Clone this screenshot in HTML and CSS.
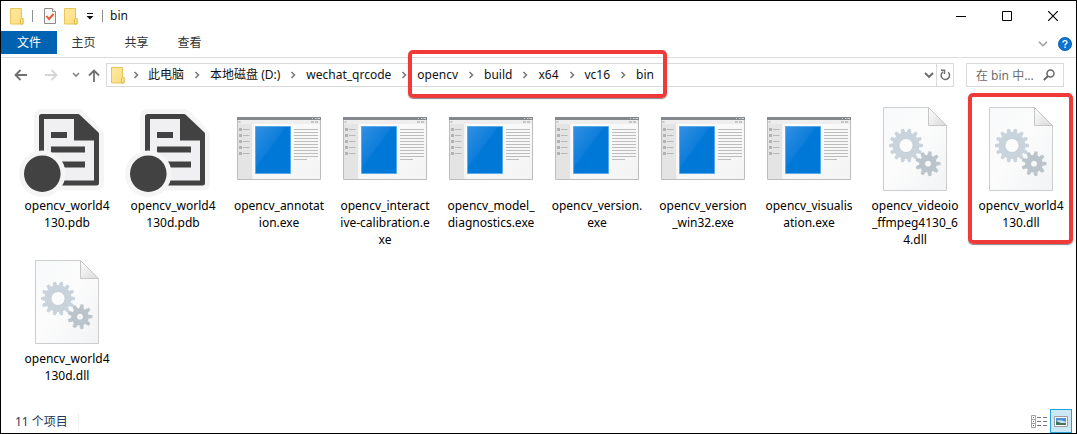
FILE: index.html
```html
<!DOCTYPE html>
<html lang="zh-CN">
<head>
<meta charset="utf-8">
<title>bin</title>
<link rel="stylesheet" href="styles.css">
</head>
<body>
<svg class="defs" aria-hidden="true">
  <defs>
    <linearGradient id="paper" x1="0" y1="0" x2="1" y2="1"><stop offset="0" stop-color="#f7f9fa"/><stop offset=".45" stop-color="#fcfcfc"/><stop offset="1" stop-color="#f1f3f5"/></linearGradient>
    <linearGradient id="fold" x1="0" y1="0" x2="1" y2="1"><stop offset="0" stop-color="#fff"/><stop offset="1" stop-color="#d9d9d9"/></linearGradient>
    <linearGradient id="blue" x1="0" y1="0" x2="1" y2="1"><stop offset="0" stop-color="#3390e2"/><stop offset=".42" stop-color="#0f7edb"/><stop offset=".46" stop-color="#0078d7"/><stop offset="1" stop-color="#0078d7"/></linearGradient>
    <linearGradient id="pane" x1="0" y1="0" x2="1" y2="1"><stop offset="0" stop-color="#fff"/><stop offset="1" stop-color="#f3f3f3"/></linearGradient>
    <linearGradient id="gold" x1="0" y1="0" x2="1" y2="1"><stop offset="0" stop-color="#ffe9a2"/><stop offset="1" stop-color="#fbdc7c"/></linearGradient>
    <symbol id="folder" viewBox="0 0 14 17">
      <path d="M.5.5h11v10h1.500v5.500H.5z" fill="url(#gold)" stroke="#e8c55a"/>
      <path d="M10.500 16v-4.500l1-1h1.500V16z" fill="#ffe9a2" stroke="#e3b93f"/>
    </symbol>
    <symbol id="pdb" viewBox="0 0 96 96">
      <path d="M22.500 15.500H59L77.500 34v48h-55z" fill="#f5f5f6" stroke="#f5f5f6" stroke-width="15" stroke-linejoin="round"/>
      <path d="M22.500 15.500H59L77.500 33v49h-55z" fill="#f0eff1" stroke="#424242" stroke-width="5" stroke-linejoin="round"/>
      <path d="M55 15h5l19 18v6.500H55z" fill="#424242"/>
      <path d="M32 31h16v6H32zM32 45.500h34v6H32zM40 60.500h26v6H40z" fill="#424242"/>
      <circle cx="23.300" cy="72.700" r="23.300" fill="#f5f5f6"/>
      <circle cx="23.300" cy="72.700" r="18.300" fill="#424242"/>
    </symbol>
    <symbol id="exe" viewBox="0 0 96 96">
      <path d="M6.500 16.500h83v62h-83z" fill="url(#pane)" stroke="#bcbcbc"/>
      <path d="M7 19h82v4H7z" fill="#eeeeef"/>
      <path d="M7 23h14v55H7z" fill="#e4e4e4"/>
      <path d="M21 23h1.500v55H21z" fill="#f4f4f4"/>
      <path d="M6 16h84v3H6z" fill="#84878c"/>
      <path d="M84 17.500h1.500m1 0h2.500M81 17.500h1" stroke="#d6d6d6"/>
      <path d="M7.500 21h2M80 21h3m1 0h3" stroke="#c6c6c6" stroke-width="2"/>
      <path d="M8 28.500h3m-3 6h3m-3 6h3m-3 6h3m-3 6h3" stroke="#b0b2b4" stroke-width="3"/>
      <path d="M12 28.500h6.500m-6.500 6h6.500m-6.500 6h6.500m-6.500 6h6.500m-6.500 6h6.500" stroke="#b8b8b8"/>
      <path d="M24.500 25.500h35v47h-35z" fill="url(#blue)" stroke="#58a9e8"/>
      <path d="M63 28.500h24m-24 3h24m-24 3h24m-24 3h24m-24 3h24m-24 3h24m-24 3h24m-24 3h24m-24 3h24m-24 3h24m-24 3h13" stroke="#bcbcbc"/>
    </symbol>
    <symbol id="dll" viewBox="0 0 96 96">
      <path d="M16.500 6.500h45l18 18v65h-63z" fill="url(#paper)" stroke="#cbcdcf"/>
      <path d="M61.500 6.500v18h18z" fill="url(#fold)" stroke="#c5c7c9"/>
      <g fill="none" stroke="#c9d3db">
        <circle cx="39" cy="44.500" r="10.300" stroke-width="6.400"/>
        <circle cx="39" cy="44.500" r="14.200" stroke-width="2.600" pathLength="140" stroke-dasharray="6 4" stroke-dashoffset="3"/>
        <circle cx="39" cy="44.500" r="15.800" stroke-width="2.400" pathLength="140" stroke-dasharray="4 6" stroke-dashoffset="2"/>
        <circle cx="39" cy="44.500" r="7" stroke="#b9c4cd" stroke-width=".7"/>
      </g>
      <g fill="none" stroke="#bac4ca">
        <circle cx="61" cy="62.700" r="6.200" stroke-width="5.400"/>
        <circle cx="61" cy="62.700" r="9.500" stroke-width="2.400" pathLength="90" stroke-dasharray="6 4" stroke-dashoffset="3"/>
        <circle cx="61" cy="62.700" r="11.300" stroke-width="2.400" pathLength="90" stroke-dasharray="4 6" stroke-dashoffset="2"/>
        <circle cx="61" cy="62.700" r="3.500" stroke="#a9b4bb" stroke-width=".7"/>
      </g>
    </symbol>
    <symbol id="chev" viewBox="0 0 6 8"><path d="M1.500 1l3 3-3 3" fill="none" stroke="#7a7a7a" stroke-width="1.600"/></symbol>
  </defs>
</svg>
<div class="window">
  <header class="titlebar">
    <svg class="folder"><use href="#folder"/></svg>
    <span class="divider"></span>
    <button class="quick" aria-label="属性"><svg width="12" height="16" viewBox="0 0 12 16"><path d="M.5.5h8l3 3v12H.5z" fill="#f7f7f7" stroke="#8c8c8c"/><path d="M8.500.5v3h3" fill="#fff" stroke="#8c8c8c"/><path d="M2.500 8l2.500 3 4.500-5" fill="none" stroke="#e8582a" stroke-width="1.900"/></svg></button>
    <button class="quick" aria-label="新建文件夹"><svg class="folder"><use href="#folder"/></svg></button>
    <button class="quick" aria-label="自定义快速访问工具栏"><svg width="8" height="7" viewBox="0 0 8 7"><path d="M1 .5h6" stroke="#111"/><path d="M.5 3h7L4 6.500z" fill="#111"/></svg></button>
    <span class="divider"></span>
    <h1 class="title">bin</h1>
    <div class="controls">
      <button aria-label="最小化"><svg width="10" height="10"><path d="M0 5.500h10" stroke="#000"/></svg></button>
      <button aria-label="最大化"><svg width="10" height="10"><path d="M.5.5h9v9h-9z" fill="none" stroke="#000"/></svg></button>
      <button aria-label="关闭"><svg width="10" height="10"><path d="M0 0l10 10M10 0L0 10" stroke="#000" stroke-width="1.200"/></svg></button>
    </div>
  </header>
  <nav class="ribbon">
    <button class="tab file">文件</button>
    <button class="tab">主页</button>
    <button class="tab">共享</button>
    <button class="tab">查看</button>
    <div class="help">
      <button aria-label="展开功能区"><svg width="10" height="6"><path d="M1 .7l4 4 4-4" fill="none" stroke="#9a9a9a" stroke-width="1.400"/></svg></button>
      <button aria-label="帮助"><svg width="14" height="14" viewBox="0 0 14 14"><circle cx="7" cy="7" r="6.600" fill="#0a74d2" stroke="#075ba8" stroke-width=".8"/><path d="M5 5.400C5 3 9 3 9 5.300 9 6.800 7.100 6.800 7.100 8.500M7.100 9.500v1.500" fill="none" stroke="#fff" stroke-width="1.400"/></svg></button>
    </div>
  </nav>
  <div class="navbar">
    <div class="history">
      <button aria-label="后退"><svg width="13" height="12"><path d="M1.500 6H13M6.500 1l-5 5 5 5" fill="none" stroke="#707070" stroke-width="1.800"/></svg></button>
      <button aria-label="前进"><svg width="13" height="12"><path d="M0 6h11.500M6.500 1l5 5-5 5" fill="none" stroke="#d5d5d5" stroke-width="1.800"/></svg></button>
      <button aria-label="最近浏览的位置"><svg width="8" height="6"><path d="M1 1l3 3 3-3" fill="none" stroke="#858585" stroke-width="1.600"/></svg></button>
      <button aria-label="向上"><svg width="12" height="13"><path d="M6 13V1.500M1 6.500l5-5 5 5" fill="none" stroke="#707070" stroke-width="1.800"/></svg></button>
    </div>
    <div class="address">
      <svg class="folder"><use href="#folder"/></svg>
      <svg class="chev"><use href="#chev"/></svg><a href="#">此电脑</a>
      <svg class="chev"><use href="#chev"/></svg><a href="#">本地磁盘 (D:)</a>
      <svg class="chev"><use href="#chev"/></svg><a href="#">wechat_qrcode</a>
      <svg class="chev"><use href="#chev"/></svg>
      <div class="crumbs marked">
        <a href="#">opencv</a><svg class="chev"><use href="#chev"/></svg><a href="#">build</a><svg class="chev"><use href="#chev"/></svg><a href="#">x64</a><svg class="chev"><use href="#chev"/></svg><a href="#">vc16</a><svg class="chev"><use href="#chev"/></svg><a href="#">bin</a>
      </div>
      <button class="drop" aria-label="以前的位置"><svg width="10" height="7"><path d="M1 1l4 4 4-4" fill="none" stroke="#6c6c6c" stroke-width="1.900"/></svg></button>
      <button class="refresh" aria-label="刷新"><svg width="11" height="12" viewBox="0 0 11 12"><path d="M8.300 3.300A4.200 4.200 0 1 1 3 2.800" fill="none" stroke="#707070" stroke-width="1.500"/><path d="M1 1.200h3.500v3.800" fill="none" stroke="#707070" stroke-width="1.500"/></svg></button>
    </div>
    <label class="search">
      <input type="text" placeholder="在 bin 中..." aria-label="在 bin 中搜索">
      <svg width="12" height="12"><circle cx="7.500" cy="4.500" r="3.500" fill="none" stroke="#666" stroke-width="1.500"/><path d="M5 7L.8 11.200" stroke="#666" stroke-width="1.900"/></svg>
    </label>
  </div>
  <main class="files">
    <div class="item"><svg class="icon"><use href="#pdb"/></svg><span>opencv_world4<br>130.pdb</span></div>
    <div class="item"><svg class="icon"><use href="#pdb"/></svg><span>opencv_world4<br>130d.pdb</span></div>
    <div class="item"><svg class="icon"><use href="#exe"/></svg><span>opencv_annotat<br>ion.exe</span></div>
    <div class="item"><svg class="icon"><use href="#exe"/></svg><span>opencv_interact<br>ive-calibration.e<br>xe</span></div>
    <div class="item"><svg class="icon"><use href="#exe"/></svg><span>opencv_model_<br>diagnostics.exe</span></div>
    <div class="item"><svg class="icon"><use href="#exe"/></svg><span>opencv_version.<br>exe</span></div>
    <div class="item"><svg class="icon"><use href="#exe"/></svg><span>opencv_version<br>_win32.exe</span></div>
    <div class="item"><svg class="icon"><use href="#exe"/></svg><span>opencv_visualis<br>ation.exe</span></div>
    <div class="item"><svg class="icon"><use href="#dll"/></svg><span>opencv_videoio<br>_ffmpeg4130_6<br>4.dll</span></div>
    <div class="item marked"><svg class="icon"><use href="#dll"/></svg><span>opencv_world4<br>130.dll</span></div>
    <div class="item"><svg class="icon"><use href="#dll"/></svg><span>opencv_world4<br>130d.dll</span></div>
  </main>
  <footer class="status">
    <span class="count">11 个项目</span>
    <div class="views">
      <button aria-label="详细信息"><svg width="17" height="13"><path d="M.5.500h4v12h-4zM.5 4.500h4M.5 8.500h4" fill="none" stroke="#a0a0a0"/><path d="M6 2.500h4m2 0h4M6 6.500h4m2 0h4M6 10.500h4m2 0h4" stroke="#757575"/><path d="M2 2.500h1" stroke="#3c9a7c"/><path d="M2 6.500h1" stroke="#3878d8"/><path d="M2 10.500h1" stroke="#d02040"/></svg></button>
      <button class="active" aria-label="大图标"><svg width="14" height="11"><path d="M.5.500h13v10H.5z" fill="#fff" stroke="#9c9c9c"/><path d="M2 2h10v4H2z" fill="#4d91d8"/><path d="M2 5q4-2 10 1v1H2z" fill="#cfe3f3"/><path d="M2 5l5 2h5v2H2z" fill="#40745c"/></svg></button>
    </div>
  </footer>
</div>
</body>
</html>
```
FILE: styles.css
```css
* { box-sizing: border-box; }
body {
  margin: 0;
  font: 12px/17px "Noto Sans", "Noto Sans CJK SC", sans-serif;
  color: #111;
  background: #fff;
}
button {
  display: flex;
  align-items: center;
  justify-content: center;
  margin: 0;
  padding: 0;
  border: 0;
  background: none;
  font: inherit;
  color: inherit;
}
a { color: inherit; text-decoration: none; white-space: nowrap; }
svg { display: block; flex: none; }
.defs { position: absolute; width: 0; height: 0; }
.window {
  display: flex;
  flex-direction: column;
  min-height: 100vh;
  border: 1px solid #000;
}
.folder { width: 14px; height: 17px; }

.titlebar { display: flex; align-items: center; height: 30px; padding-left: 9px; }
.divider { width: 1px; height: 12px; margin: 0 11px 0 8px; background: #8f8f8f; }
.quick { margin-right: 8px; }
.quick + .divider { margin: 0 7px 0 0; }
.title { margin: 0; padding-bottom: 2px; font-size: 12px; font-weight: 400; }
.controls { display: flex; margin-left: auto; }
.controls button { width: 46px; height: 28px; }

.ribbon { display: flex; height: 27px; border-bottom: 1px solid #dadbdc; }
.tab { width: 53px; height: 23px; color: #333; }
.tab.file { width: 56px; color: #fff; background: #0063b1; }
.help { display: flex; align-items: center; gap: 10px; margin-left: auto; padding-right: 4px; }

.navbar { display: flex; gap: 12px; padding: 5px 12px 0 13px; }
.history { display: flex; align-items: center; justify-content: space-between; width: 86px; margin-right: -6px; }
.history button:nth-child(2) { margin-left: 10px; }
.history button:nth-child(3) { margin-left: 6px; }
.address {
  display: flex;
  flex: 1;
  align-items: center;
  height: 24px;
  padding-left: 4px;
  border: 1px solid #d9d9d9;
}
.address a { padding-bottom: 2px; }
.chev { width: 6px; height: 8px; margin: 0 10px; }
.folder + .chev { margin: 0 9px 0 8px; }
.crumbs { display: flex; align-items: center; height: 22px; }
.marked { position: relative; }
.marked::after {
  content: "";
  position: absolute;
  border: 4px solid #f03a3a;
  border-radius: 5px;
  box-shadow: 0 1px 1px #888;
  pointer-events: none;
}
.crumbs.marked::after { inset: -14px -13px -12px -9px; }
.drop { width: 15px; height: 22px; margin-left: auto; }
.refresh { width: 17px; height: 22px; border-left: 1px solid #d9d9d9; }
.search {
  display: flex;
  align-items: center;
  width: 98px;
  height: 24px;
  padding: 0 8px 0 9px;
  border: 1px solid #d9d9d9;
}
.search input {
  flex: 1;
  min-width: 0;
  margin-right: 4px;
  padding: 0;
  border: 0;
  outline: 0;
  font: inherit;
  background: none;
}
.search input::placeholder { color: #6d6d6d; opacity: 1; }

.files {
  display: grid;
  flex: 1;
  grid-template-columns: repeat(auto-fill, 106px);
  grid-auto-rows: min-content;
  row-gap: 6px;
  padding: 14px 0 0 13px;
}
.item {
  display: flex;
  flex-direction: column;
  align-items: center;
  min-height: 147px;
  text-align: center;
  white-space: nowrap;
  color: #000;
}
.icon { width: 96px; height: 96px; }
.item.marked::after { inset: -8px 1px 4px 0; }

.status { display: flex; align-items: center; height: 24px; padding: 0 4px 0 14px; }
.count { padding-right: 10px; border-right: 1px solid #f0f0f0; color: #1e395b; }
.views { display: flex; margin-left: auto; }
.views button { width: 22px; height: 24px; }
.views .active { border: 1px solid #26a0da; background: #cbe8f6; }
```
